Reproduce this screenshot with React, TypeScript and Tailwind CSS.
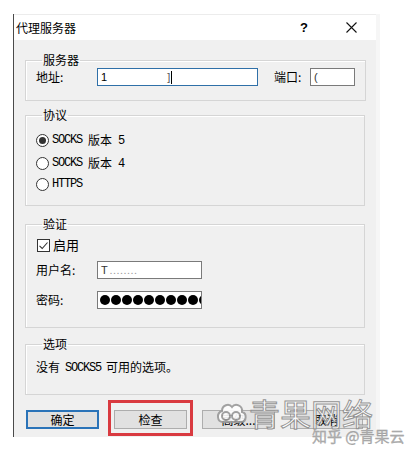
import React from "react";

const cjk = "font-[family-name:'Noto_Sans_CJK_SC','Noto_Sans',sans-serif]";
const mono = "font-[family-name:'Liberation_Mono',monospace] text-[12px] tracking-[-1.2px] font-normal";

function Mono({ children }: { children: React.ReactNode }) {
  return <span className={mono}>{children}</span>;
}

function Group({
  title,
  h,
  className = "",
  children,
}: {
  title: string;
  h: string;
  className?: string;
  children: React.ReactNode;
}) {
  return (
    <fieldset
      className={`border border-[#d5d5d5] shadow-[inset_1px_1px_0_#ffffff] px-[10px] ${h} ${className}`}
    >
      <legend className="ml-[6px] px-[1px] leading-[16px] text-[12px] text-black">{title}</legend>
      {children}
    </fieldset>
  );
}

function Radio({ checked, children, className = "" }: { checked?: boolean; children: React.ReactNode; className?: string }) {
  return (
    <div className={`flex items-center h-[20px] ${className}`}>
      <div className="w-[13px] h-[13px] rounded-full border border-[#333333] bg-white flex items-center justify-center">
        {checked && <div className="w-[7px] h-[7px] rounded-full bg-[#333333]" />}
      </div>
      <div className="ml-[3px] flex items-center text-black">{children}</div>
    </div>
  );
}

function Button({ label, primary }: { label: string; primary?: boolean }) {
  return (
    <div
      className={`w-[73px] h-[19px] flex items-center justify-center bg-[#e1e1e1] text-[12px] text-black ${
        primary ? "border-2 border-[#2a73b8]" : "border border-[#adadad]"
      }`}
    >
      {label}
    </div>
  );
}

export default function App() {
  return (
    <div className={`relative w-[420px] h-[458px] bg-white overflow-hidden ${cjk} text-[12px] text-black`}>
      <div className="ml-[13px] mt-[14px] w-[367px] flex flex-col border-l border-[#4a4a4a] border-r-[4px] border-r-[#f6f6f6]">
        {/* title bar */}
        <div className="h-[26px] bg-white border-t border-[#ececec] flex items-center pl-[2px] pr-[19px]">
          <span className="text-[12px]">代理服务器</span>
          <span className="ml-auto mr-[38px] text-[13px] font-bold font-[family-name:'Liberation_Sans',sans-serif]">?</span>
          <svg width="11" height="11" viewBox="0 0 11 11" className="mb-[1px]">
            <path d="M0.5 0.5 L10.5 10.5 M10.5 0.5 L0.5 10.5" stroke="#111" strokeWidth="1.1" fill="none" />
          </svg>
        </div>
        {/* body */}
        <div className="h-[397px] bg-[#f0f0f0] px-[11px] pt-[12px] flex flex-col">
          <Group title="服务器" h="h-[49px]">
            <div className="flex items-center h-[18px]">
              <span className="w-[61px] leading-[18px]">地址:</span>
              <div className="w-[161px] h-[18px] border border-[#2f70a8] bg-white flex items-center pl-[3px] text-[12px]">
                <span className="font-[family-name:'Liberation_Sans',sans-serif] text-[11px]">1</span>
                <span className="ml-[60px] font-[family-name:'Liberation_Sans',sans-serif] text-[11px] text-[#555]">]</span>
                <span className="ml-[1px] w-[1px] h-[13px] bg-black" />
              </div>
              <span className="ml-[16px] w-[36px] leading-[18px]">端口:</span>
              <div className="w-[45px] h-[18px] border border-[#7a7a7a] bg-white flex items-center pl-[3px]">
                <span className="font-[family-name:'Liberation_Sans',sans-serif] text-[11px] text-[#333]">(</span>
              </div>
            </div>
          </Group>

          <Group title="协议" h="h-[99px]" className="mt-[6px]">
            <Radio checked className="mt-[7px]">
              <Mono>SOCKS</Mono>
              <span className="ml-[6px]">版本</span>
              <span className="ml-[6px]"><Mono>5</Mono></span>
            </Radio>
            <Radio className="mt-[3px]">
              <Mono>SOCKS</Mono>
              <span className="ml-[6px]">版本</span>
              <span className="ml-[6px]"><Mono>4</Mono></span>
            </Radio>
            <Radio className="mt-[1px]">
              <Mono>HTTPS</Mono>
            </Radio>
          </Group>

          <Group title="验证" h="h-[112px]" className="mt-[10px]">
            <div className="flex items-center h-[20px] mt-[3px]">
              <div className="w-[13px] h-[13px] border border-[#333333] bg-white flex items-center justify-center ml-[1px]">
                <svg width="11" height="11" viewBox="0 0 11 11">
                  <path d="M1.5 5.8 L4.2 8.5 L9.5 2.5" stroke="#333" strokeWidth="1.1" fill="none" />
                </svg>
              </div>
              <span className="ml-[3px] text-[13px]">启用</span>
            </div>
            <div className="flex items-center h-[18px] mt-[6px]">
              <span className="w-[61px]">用户名:</span>
              <div className="w-[105px] h-[18px] border border-[#7a7a7a] bg-white flex items-center pl-[3px]">
                <span className="font-[family-name:'Liberation_Sans',sans-serif] text-[11px] text-[#333]">T</span>
                <span className="ml-[2px] text-[9px] text-[#999] tracking-[1px] leading-none">........</span>
              </div>
            </div>
            <div className="flex items-center h-[18px] mt-[12px]">
              <span className="w-[61px]">密码:</span>
              <div className="w-[105px] h-[18px] border border-[#7a7a7a] bg-white flex items-center pl-[2px] gap-[1px] overflow-hidden">
                {Array.from({ length: 10 }).map((_, i) => (
                  <div key={i} className="shrink-0 w-[10px] h-[10px] rounded-full bg-black" />
                ))}
              </div>
            </div>
          </Group>

          <Group title="选项" h="h-[59px]" className="mt-[8px]">
            <div className="flex items-center h-[20px] mt-[5px]">
              <span>没有</span>
              <span className="ml-[5px]"><Mono>SOCKS5</Mono></span>
              <span className="ml-[5px]">可用的选项。</span>
            </div>
          </Group>

          <div className="flex mt-[15px] ml-[1px] gap-[15px]">
            <Button label="确定" primary />
            <div className="relative">
              <Button label="检查" />
              <div className="absolute -left-[6px] -top-[10px] w-[85px] h-[36px] border-[3px] border-[#d93a40]" />
            </div>
            <Button label="高级..." />
            <Button label="取消" />
          </div>
        </div>
      </div>

      {/* watermark */}
      <div className="absolute left-[214px] top-[397px] flex items-center opacity-90">
        <svg width="34" height="30" viewBox="0 0 34 30">
          <path
            d="M9 24 C3 24 2 15 8 13 C8 7 15 5 18 9 C21 5 29 7 28 14 C33 15 33 24 27 24 Z"
            fill="#ffffff"
            stroke="#9a9a9a"
            strokeWidth="2"
          />
          <circle cx="12" cy="18" r="4" fill="none" stroke="#9a9a9a" strokeWidth="2" />
          <circle cx="22" cy="18" r="4" fill="none" stroke="#9a9a9a" strokeWidth="2" />
        </svg>
        <span className="ml-[1px] text-[31px] leading-[32px] text-white [-webkit-text-stroke:1px_#8a8a8a]">
          青果网络
        </span>
      </div>
      <div className="absolute left-[312px] top-[426px] text-[15px] leading-[20px] text-[#b0b0b0] [-webkit-text-stroke:0.3px_#999]">
        知乎 @青果云
      </div>
    </div>
  );
}
